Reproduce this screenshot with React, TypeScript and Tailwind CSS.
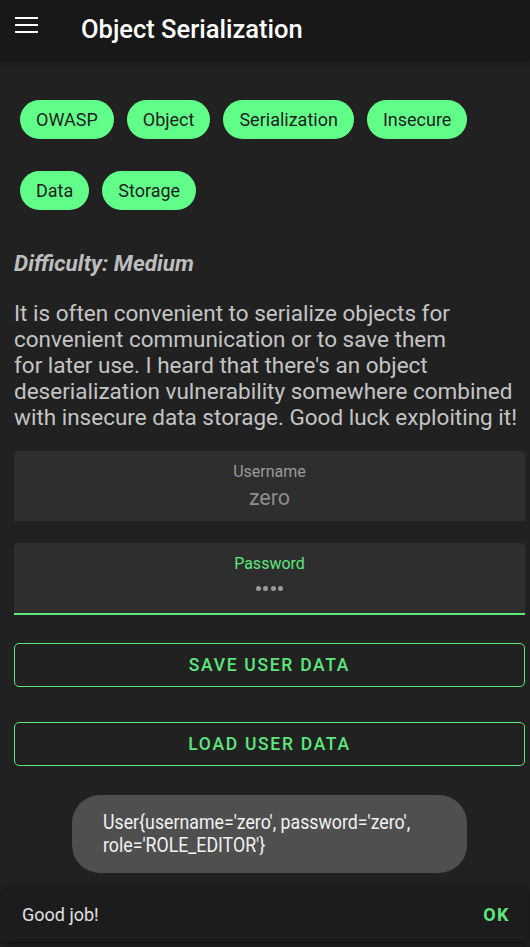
const tags = ["OWASP", "Object", "Serialization", "Insecure", "Data", "Storage"];

const App = () => {
  return (
    <div className="relative min-h-[947px] bg-[#212121] font-['Roboto',sans-serif]">
      {/* Top bar */}
      <header className="flex h-[60px] items-start bg-[#181818] shadow-[0_2px_4px_rgba(0,0,0,0.35)]">
        <div className="flex w-[81px] pl-[15px] pt-[17px]">
          <div className="flex w-[23px] flex-col gap-[5px]">
            <span className="block h-[2px] bg-white" />
            <span className="block h-[2px] bg-white" />
            <span className="block h-[2px] bg-white" />
          </div>
        </div>
        <h1 className="pt-[14px] text-[25.5px] font-medium leading-[30px] text-white">Object Serialization</h1>
      </header>

      <main className="pl-[14px] pr-[5px]">
        {/* Tags */}
        <div className="flex flex-wrap gap-x-[13px] gap-y-[32px] pl-[6px] pt-[40px]">
          {tags.map((t) => (
            <span
              key={t}
              className="flex h-[39px] items-center rounded-full bg-[#62fe8a] px-[16px] text-[18px] text-[#1e1e1e]"
            >
              {t}
            </span>
          ))}
        </div>

        <p className="mt-[40px] text-[22.5px] font-bold italic leading-[26px] text-[#bdbdbd]">
          Difficulty: Medium
        </p>

        <p className="mt-[24px] text-[22.5px] leading-[26px] text-[#c4c4c4]">
          It is often convenient to serialize objects for
          <br />
          convenient communication or to save them
          <br />
          for later use. I heard that there's an object
          <br />
          deserialization vulnerability somewhere combined
          <br />
          with insecure data storage. Good luck exploiting it!
        </p>

        {/* Fields */}
        <div className="mt-[21px] flex h-[70px] flex-col items-center rounded-t-[4px] bg-[#2e2e2e] pt-[11px]">
          <span className="text-[16px] leading-[20px] text-[#9a9a9a]">Username</span>
          <span className="mt-[3px] text-[21.5px] leading-[26px] text-[#8c8c8c]">zero</span>
        </div>

        <div className="mt-[22px] flex h-[72px] flex-col items-center rounded-t-[4px] border-b-2 border-[#5ce67c] bg-[#2e2e2e] pt-[11px]">
          <span className="text-[16px] leading-[20px] text-[#5ce67c]">Password</span>
          <div className="mt-[12px] flex gap-[2.3px]">
            <span className="h-[5px] w-[5px] rounded-full bg-[#9a9a9a]" />
            <span className="h-[5px] w-[5px] rounded-full bg-[#9a9a9a]" />
            <span className="h-[5px] w-[5px] rounded-full bg-[#9a9a9a]" />
            <span className="h-[5px] w-[5px] rounded-full bg-[#9a9a9a]" />
          </div>
        </div>

        {/* Buttons */}
        <button className="mt-[28px] flex h-[44px] w-full items-center justify-center rounded-[5px] border-[1.5px] border-[#5ce67c] text-[17.5px] font-medium tracking-[1.7px] text-[#5ce67c]">
          SAVE USER DATA
        </button>
        <button className="mt-[35px] flex h-[44px] w-full items-center justify-center rounded-[5px] border-[1.5px] border-[#5ce67c] text-[17.5px] font-medium tracking-[1.7px] text-[#5ce67c]">
          LOAD USER DATA
        </button>
      </main>

      {/* Toast */}
      <div className="absolute left-[72px] top-[795px] h-[78px] w-[395px] rounded-[28px] bg-[#4f4f4f] pl-[31px] pt-[16px]">
        <p className="origin-left scale-x-[0.845] whitespace-nowrap text-[21px] leading-[23px] text-[#f2f2f2]">
          User{"{"}username='zero', password='zero',
          <br />
          role='ROLE_EDITOR'{"}"}
        </p>
      </div>

      {/* Snackbar */}
      <div className="absolute left-[2px] top-[887px] flex h-[55px] w-[526px] items-center justify-between rounded-[4px] bg-[#1c1c1c] pl-[20px] pr-[18px] shadow-[0_2px_6px_rgba(0,0,0,0.5)]">
        <span className="text-[18px] text-[#e0e0e0]">Good job!</span>
        <span className="text-[18px] font-bold tracking-[1.5px] text-[#5ce67c]">OK</span>
      </div>
    </div>
  );
};

export default App;
